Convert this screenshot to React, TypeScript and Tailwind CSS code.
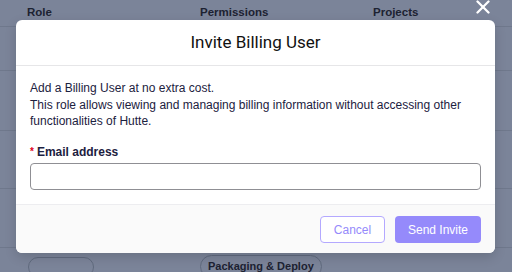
import { X } from "lucide-react";

const rows = ["h-[44px]", "h-[60px]", "h-[58px]", "h-[59px]"];

export default function App() {
  return (
    <div className="relative w-[512px] h-[272px] overflow-hidden bg-[#7b8499] font-['Liberation_Sans',Arial,sans-serif]">
      {/* Table behind the overlay */}
      <div className="flex flex-col">
        <div className="flex h-[27px] items-center border-b border-[#6f788c] pl-[27px] text-[11.5px] font-bold text-[#1d2232]">
          <span className="w-[173px]">Role</span>
          <span className="w-[173px]">Permissions</span>
          <span>Projects</span>
        </div>
        {rows.map((h, i) => (
          <div key={i} className={`${h} border-b border-[#6f788c]`} />
        ))}
        <div className="flex items-start pt-[7px]">
          <div className="ml-[28px] mt-[2px] h-[20px] w-[66px] rounded-full border border-[#606a7e]" />
          <div className="ml-[106px] rounded-full border border-[#606a7e] px-[7px] py-[2px] text-[11px] font-bold text-[#1d2232]">
            Packaging &amp; Deploy
          </div>
        </div>
      </div>

      <X className="absolute right-[18px] top-[-4px] size-[22px] text-white" strokeWidth={2.5} />

      {/* Modal */}
      <div className="absolute left-[16px] top-[20px] w-[479px] overflow-hidden rounded-[6px] bg-white shadow-[0_4px_12px_rgba(0,0,0,0.15)]">
        <div className="flex h-[46px] items-center justify-center border-b border-[#e6e6e8] font-['Roboto',sans-serif] text-[17px] text-[#111]">
          Invite Billing User
        </div>
        <div className="px-[14px] pt-[14px] pb-[14px] text-[12px] leading-[16.5px] text-[#1c2140]">
          <p>Add a Billing User at no extra cost.</p>
          <p>This role allows viewing and managing billing information without accessing other functionalities of Hutte.</p>
          <div className="mt-[14px] flex items-center gap-[3px] font-bold">
            <span className="text-[10px] text-[#e0001b]">*</span>
            <span>Email address</span>
          </div>
          <div className="mt-[3px] h-[27px] rounded-[4px] border border-[#8f8f94]" />
        </div>
        <div className="flex h-[49px] items-center justify-end gap-[10px] border-t border-[#ededf0] bg-[#fafafa] px-[14px] pt-[1px]">
          <button className="h-[27px] w-[65px] rounded-[4px] border border-[#b4a9ff] bg-white text-[12px] text-[#958afb]">
            Cancel
          </button>
          <button className="h-[27px] w-[86px] rounded-[4px] bg-[#958afb] text-[12px] text-white">
            Send Invite
          </button>
        </div>
      </div>
    </div>
  );
}
